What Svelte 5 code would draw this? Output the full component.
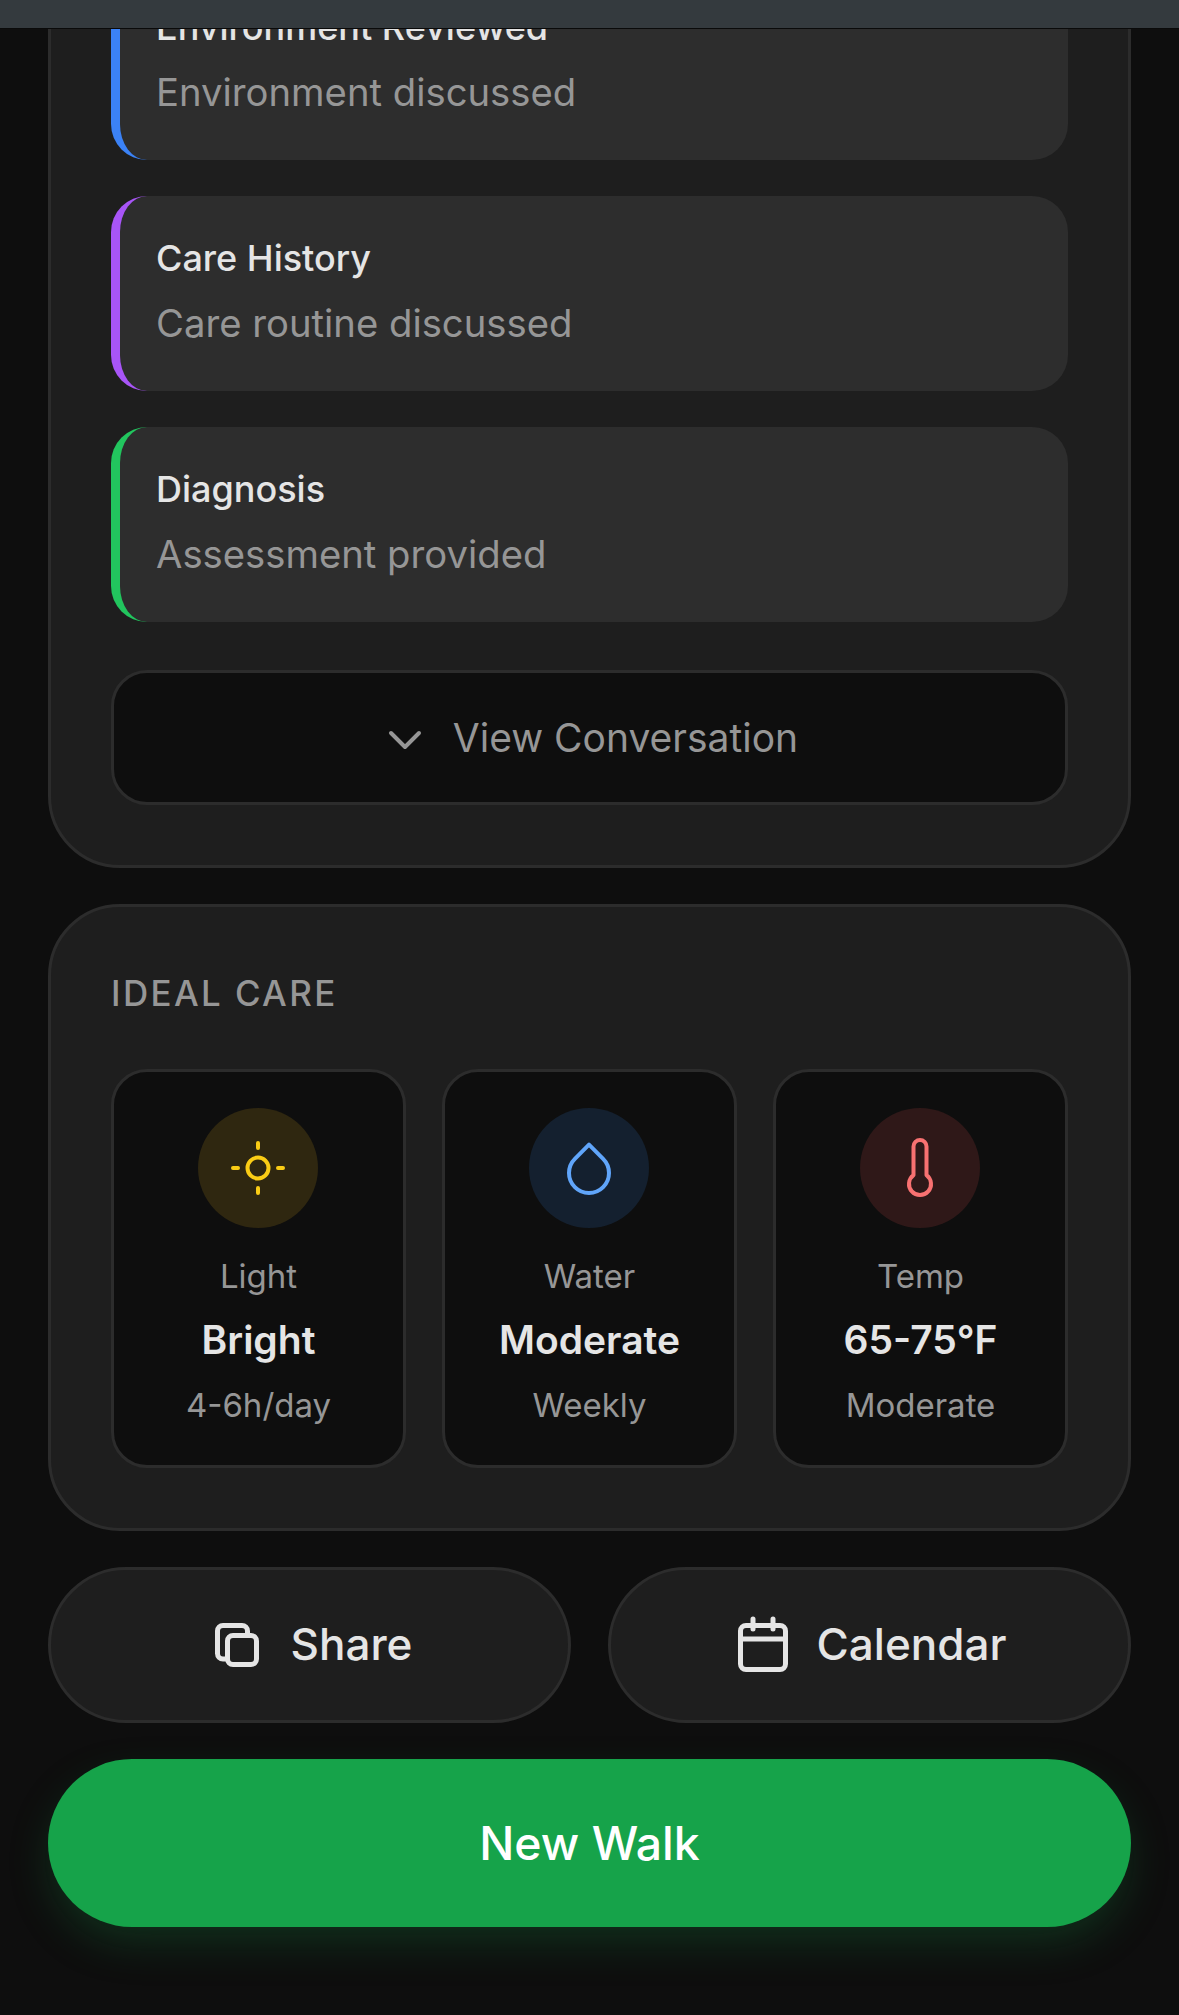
<script>
	const findings = [
		{ title: 'Environment Reviewed', text: 'Environment discussed', color: '#3b82f6' },
		{ title: 'Care History', text: 'Care routine discussed', color: '#a855f7' },
		{ title: 'Diagnosis', text: 'Assessment provided', color: '#22c55e' }
	];

	const care = [
		{ kind: 'light', label: 'Light', value: 'Bright', note: '4-6h/day' },
		{ kind: 'water', label: 'Water', value: 'Moderate', note: 'Weekly' },
		{ kind: 'temp', label: 'Temp', value: '65-75°F', note: 'Moderate' }
	];
</script>

<div class="page">
	<div class="top-bar"></div>
	<div class="scroller">
		<section class="card first">
			<div class="findings">
				{#each findings as item}
					<div class="finding" style="border-left-color: {item.color}">
						<div class="finding-title">{item.title}</div>
						<div class="finding-text">{item.text}</div>
					</div>
				{/each}
			</div>
			<button class="toggle">
				<svg width="48" height="48" viewBox="0 0 48 48" fill="none" stroke="currentColor" stroke-width="4" stroke-linecap="round" stroke-linejoin="round">
					<path d="M10 19 L24 33 L38 19" />
				</svg>
				<span>View Conversation</span>
			</button>
		</section>

		<section class="card">
			<h2 class="heading">IDEAL CARE</h2>
			<div class="care-grid">
				{#each care as tile}
					<div class="tile">
						<div class="bubble {tile.kind}">
							<svg width="72" height="72" viewBox="0 0 72 72" fill="none" stroke="currentColor" stroke-width="4" stroke-linecap="round" stroke-linejoin="round">
								{#if tile.kind === 'light'}
									<circle cx="36" cy="36" r="10.5" />
									<path d="M36 11 V16 M36 56 V61 M11 36 H16 M56 36 H61" />
								{:else if tile.kind === 'water'}
									<path d="M36 12.7 L50.14 26.86 A20 20 0 1 1 21.86 26.86 Z" />
								{:else}
									<path d="M29.5 43.1 V14.5 A6.5 6.5 0 0 1 42.5 14.5 V43.1 A11 11 0 1 1 29.5 43.1 Z" />
								{/if}
							</svg>
						</div>
						<div class="tile-label">{tile.label}</div>
						<div class="tile-value">{tile.value}</div>
						<div class="tile-note">{tile.note}</div>
					</div>
				{/each}
			</div>
		</section>

		<div class="actions">
			<button class="action">
				<svg width="60" height="60" viewBox="0 0 60 60" fill="none" stroke="currentColor" stroke-width="5" stroke-linecap="round" stroke-linejoin="round">
					<path d="M18 44 H16 A5.5 5.5 0 0 1 10.5 38.5 V16 A5.5 5.5 0 0 1 16 10.5 H35 A5.5 5.5 0 0 1 40.5 16 V19" />
					<rect x="20.5" y="20.5" width="29" height="29" rx="5.5" />
				</svg>
				<span class="action-text">Share</span>
			</button>
			<button class="action">
				<svg width="60" height="60" viewBox="0 0 60 60" fill="none" stroke="currentColor" stroke-width="5" stroke-linecap="round" stroke-linejoin="round">
					<rect x="7.5" y="10.5" width="45" height="44" rx="5.5" />
					<path d="M20 4 V14 M40 4 V14 M7.5 24 H52.5" />
				</svg>
				<span class="action-text">Calendar</span>
			</button>
		</div>
		<button class="primary">New Walk</button>
	</div>
</div>

<style>
	:global(body) {
		background: #0e0e0e;
	}

	.page {
		height: 2015px;
		display: flex;
		flex-direction: column;
		overflow: hidden;
		background: #0e0e0e;
		font-family: Inter, 'Liberation Sans', sans-serif;
	}

	.top-bar {
		flex: none;
		height: 28px;
		background: #343a3e;
		border-bottom: 1px solid #0a0a0a;
	}

	.scroller {
		flex: 1;
		min-height: 0;
		overflow: hidden;
		padding: 0 48px;
		display: flex;
		flex-direction: column;
		gap: 36px;
	}

	.card {
		flex: none;
		background: #1e1e1e;
		border: 3px solid #2c2c2c;
		border-radius: 72px;
		padding: 60px;
	}

	.card.first {
		margin-top: -127px;
	}

	.findings {
		display: flex;
		flex-direction: column;
		gap: 36px;
	}

	.finding {
		background: #2d2d2d;
		border-left: 9px solid;
		border-radius: 36px;
		padding: 35px 36px 38px;
	}

	.finding-title {
		font-size: 36px;
		line-height: 54px;
		font-weight: 500;
		color: #e5e5e5;
	}

	.finding-text {
		margin-top: 8px;
		font-size: 38.25px;
		line-height: 60px;
		color: #969696;
	}

	.toggle {
		margin-top: 48px;
		width: 100%;
		height: 135px;
		display: flex;
		align-items: center;
		justify-content: center;
		gap: 24px;
		background: #0e0e0e;
		border: 3px solid #2c2c2c;
		border-radius: 36px;
		color: #969696;
		font: inherit;
		font-size: 39px;
		font-weight: 400;
	}

	.heading {
		margin: 0 0 49px;
		font-size: 34.9px;
		line-height: 53px;
		font-weight: 500;
		letter-spacing: 2.4px;
		color: #969696;
	}

	.care-grid {
		display: grid;
		grid-template-columns: repeat(3, 1fr);
		gap: 36px;
	}

	.tile {
		display: flex;
		flex-direction: column;
		align-items: center;
		background: #0e0e0e;
		border: 3px solid #2c2c2c;
		border-radius: 36px;
		padding: 36px 12px 36px;
	}

	.bubble {
		width: 120px;
		height: 120px;
		margin-right: 1.5px;
		border-radius: 50%;
		display: flex;
		align-items: center;
		justify-content: center;
	}

	.bubble.light {
		background: #2f2710;
		color: #facc15;
	}

	.bubble.water {
		background: #14202f;
		color: #60a5fa;
	}

	.bubble.temp {
		background: #2f1818;
		color: #f87171;
	}

	.tile-label {
		margin-top: 24px;
		font-size: 33px;
		line-height: 48px;
		color: #969696;
	}

	.tile-value {
		margin-top: 13px;
		font-size: 39px;
		line-height: 54px;
		font-weight: 600;
		color: #e5e5e5;
	}

	.tile-note {
		margin-top: 14px;
		font-size: 33px;
		line-height: 48px;
		color: #969696;
	}

	.actions {
		flex: none;
		display: grid;
		grid-template-columns: 1fr 1fr;
		gap: 37px;
	}

	.action {
		height: 156px;
		display: flex;
		align-items: center;
		justify-content: center;
		gap: 24px;
		background: #1e1e1e;
		border: 3px solid #2c2c2c;
		border-radius: 78px;
		color: #e5e5e5;
		font: inherit;
		font-size: 44px;
		font-weight: 500;
	}

	.action-text {
		margin-bottom: 2px;
	}

	.primary {
		flex: none;
		height: 168px;
		border: none;
		border-radius: 84px;
		background: #16a34a;
		color: #fff;
		font: inherit;
		font-size: 46.4px;
		font-weight: 500;
		box-shadow: 0 18px 45px -6px rgba(22, 163, 74, 0.25);
	}
</style>
